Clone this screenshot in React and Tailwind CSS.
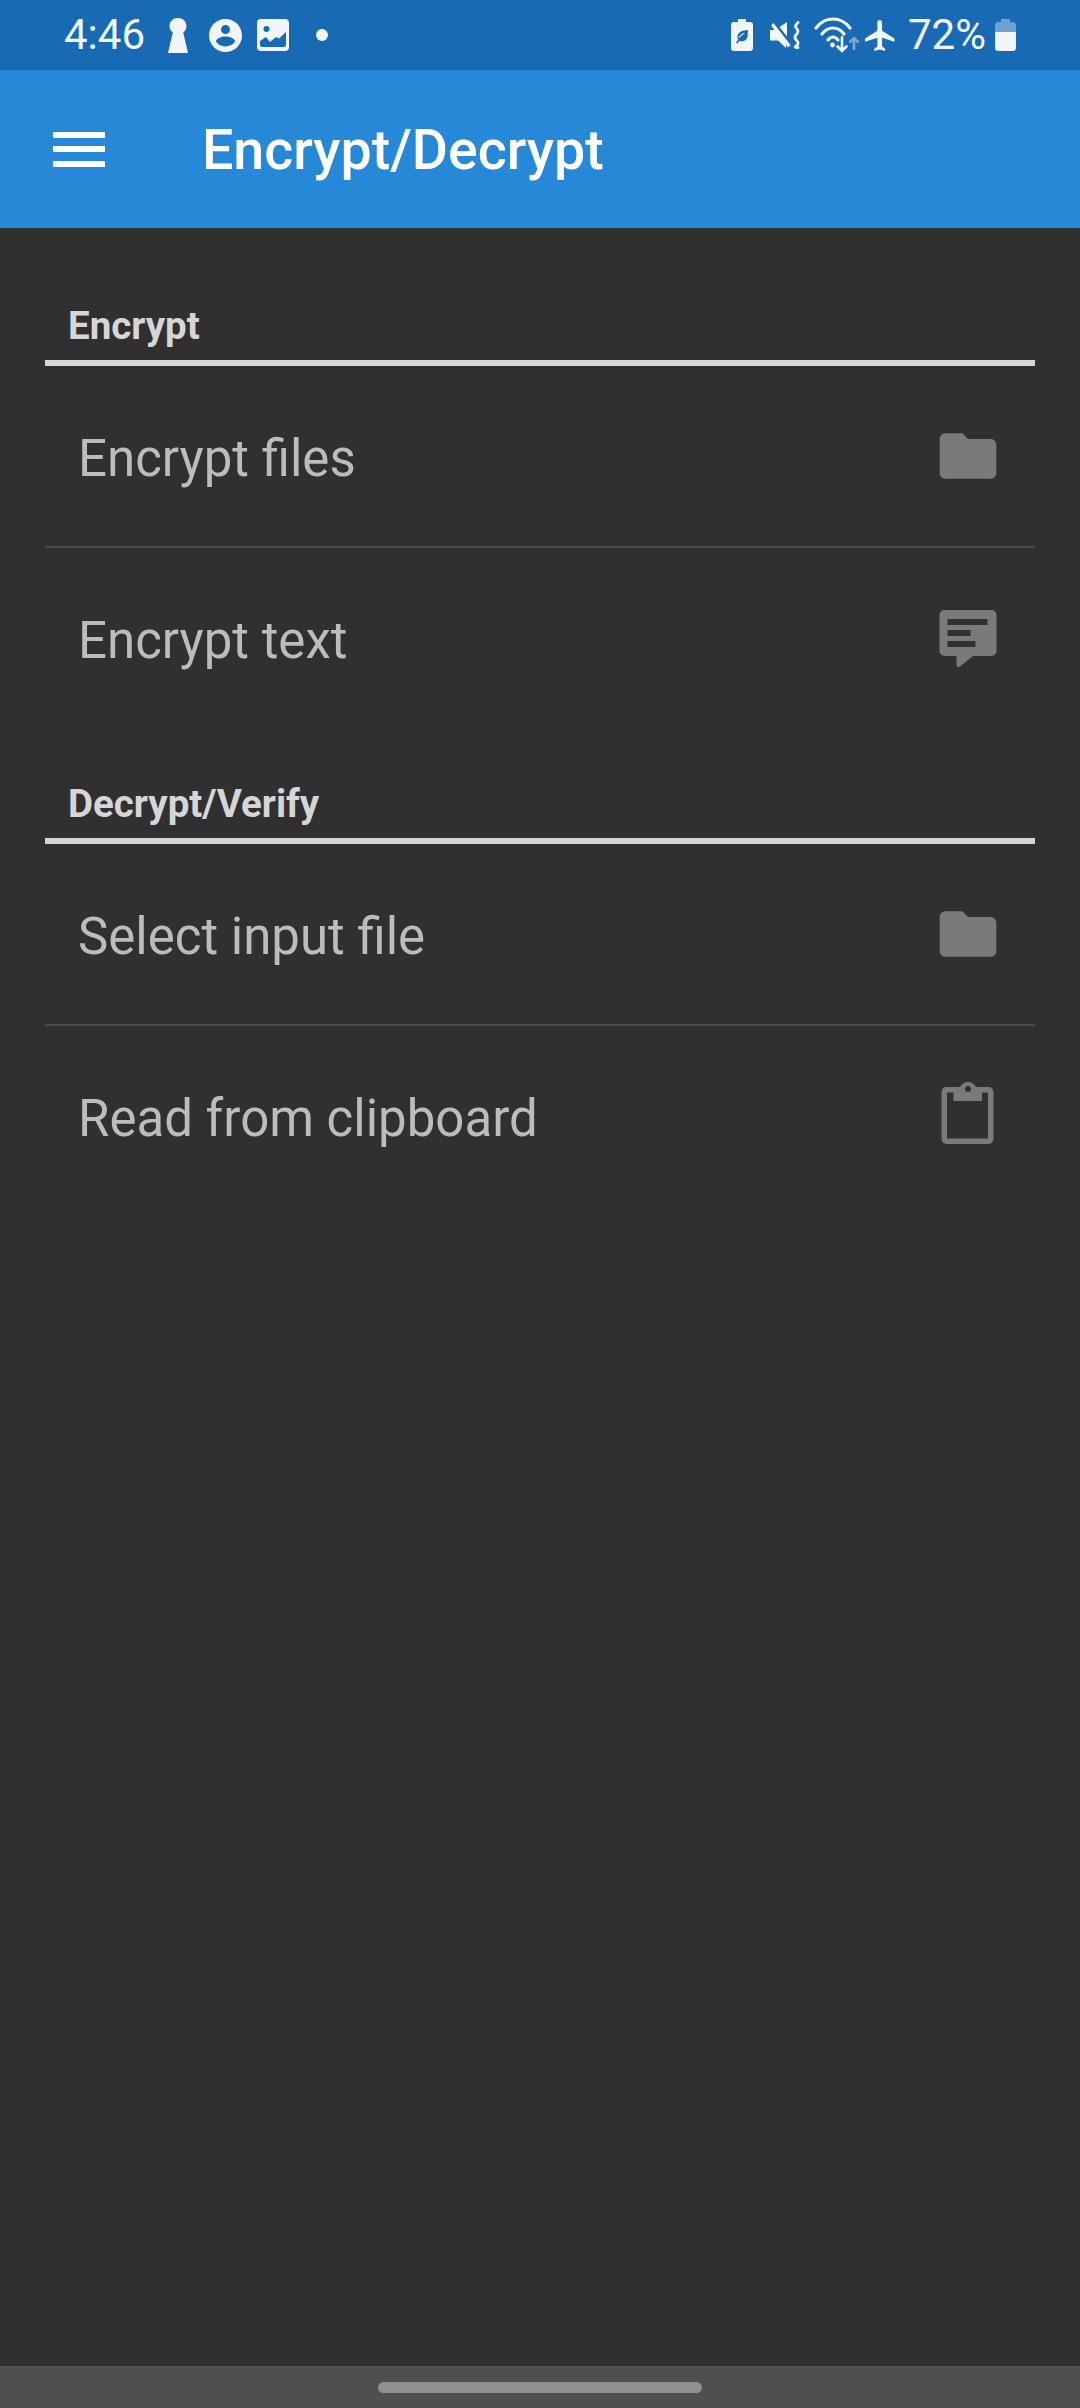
const Folder = () => (
  <svg viewBox="0 0 24 24" className="w-[68px] h-[68px] fill-[#7a7a7a]">
    <path d="M10 4H4c-1.1 0-2 .9-2 2v12c0 1.1.9 2 2 2h16c1.1 0 2-.9 2-2V8c0-1.1-.9-2-2-2h-8l-2-2z" />
  </svg>
);

const Comment = () => (
  <svg viewBox="0 0 68 68" className="w-[68px] h-[68px] fill-[#7a7a7a]">
    <path
      fillRule="evenodd"
      d="M10.500 6h47a5 5 0 0 1 5 5v36a5 5 0 0 1-5 5H39L26 62.500c-1.500 1.200-3.500.3-3.500-1.500V52h-12a5 5 0 0 1-5-5V11a5 5 0 0 1 5-5zM13.500 15v6h40v-6zM13.500 26v6h23v-6zM13.500 37v6h28v-6z"
    />
  </svg>
);

const Clipboard = () => (
  <svg viewBox="0 0 68 68" className="w-[68px] h-[68px] fill-[#7a7a7a] overflow-visible">
    <path
      fillRule="evenodd"
      d="M12.500 5H26.200A8.500 8.500 0 0 1 41.800 5H54.500a5 5 0 0 1 5 5v47a5 5 0 0 1-5 5h-42a5 5 0 0 1-5-5V10a5 5 0 0 1 5-5zM34 4a3 3 0 1 0 0 6 3 3 0 0 0 0-6zM13 10.500V56.500H54V10.500H48V19H19.500V10.500z"
    />
  </svg>
);

const Keyhole = () => (
  <svg viewBox="0 0 20 35" className="w-[20px] h-[35px] fill-[#f2f6fb]">
    <path d="M10 0c4.600 0 8.500 3.400 8.500 8 0 3-1.500 5.200-3.300 6.500L20 35H0l4.800-20.500C3 13.200 1.500 11 1.500 8c0-4.600 3.900-8 8.500-8z" />
  </svg>
);

const Person = () => (
  <svg viewBox="0 0 33 33" className="w-[33px] h-[33px] fill-[#f2f6fb]">
    <path
      fillRule="evenodd"
      d="M16.500 0a16.500 16.500 0 1 1 0 33 16.500 16.500 0 0 1 0-33zM16.500 6a4.500 4.500 0 1 0 0 9 4.500 4.500 0 0 0 0-9zM16.500 17.500c-4.800 0-8.500 2-9.700 4.800 1.700 2.800 5.500 5.200 9.700 5.200s8-2.400 9.700-5.200c-1.200-2.800-4.900-4.800-9.700-4.800z"
    />
  </svg>
);

const ImageIcon = () => (
  <svg viewBox="0 0 32 32" className="w-[32px] h-[32px] fill-[#f2f6fb]">
    <path
      fillRule="evenodd"
      d="M4 0h24a4 4 0 0 1 4 4v24a4 4 0 0 1-4 4H4a4 4 0 0 1-4-4V4a4 4 0 0 1 4-4zM9.500 7a3 3 0 1 0 0 6 3 3 0 0 0 0-6zM3 22v4a2 2 0 0 0 2 2h22a2 2 0 0 0 2-2V13l-7 6.500-3-1.500-6 5-4-5z"
    />
  </svg>
);

const LeafBattery = () => (
  <svg viewBox="0 0 22 32" className="w-[22px] h-[32px] fill-[#f2f6fb]">
    <path
      fillRule="evenodd"
      d="M7 0h8v3h4a3 3 0 0 1 3 3v23a3 3 0 0 1-3 3H3a3 3 0 0 1-3-3V6a3 3 0 0 1 3-3h4zM17 11c-5 .3-10 1.500-10.500 6.500-.1 1.200.2 2.300.7 3.200L5 23.500l1.300 1 2-2.500c4 1 8-.5 8.300-5 .1-2 .3-4 .4-6zM13.500 14.500c-2 1-3.500 2.500-4.800 4.500l-1-.7c1.500-2 3.300-3.500 5.500-4.700z"
    />
  </svg>
);

const Mute = () => (
  <svg viewBox="0 0 30 28" className="w-[30px] h-[28px]">
    <path className="fill-[#f2f6fb]" d="M0 9h4.500L1 4.500 3.500 2 20.500 24 18 26.500 16 24v3L8 19.500H0z M17 1v14.500L9.500 6z" />
    <path
      className="fill-none stroke-[#f2f6fb]"
      strokeWidth="2.800"
      strokeLinecap="round"
      d="M28 1.500c-3 3-3 4-1 6.500s1 4-1 6 -1 4 1 6 1 4 -1 5 0 1.500 2 1.500"
    />
  </svg>
);

const Wifi = () => (
  <svg viewBox="0 0 46 35" className="w-[46px] h-[35px] overflow-visible">
    <g className="fill-none stroke-[#f2f6fb]" strokeLinecap="round">
      <path strokeWidth="3.200" d="M2 10C11 -2 27 -2 36 10" />
      <path strokeWidth="3.200" d="M8 16C14 8 24 8 30 16" />
      <path strokeWidth="3.200" d="M14 22C17 18 21 18 24 22" />
      <path strokeWidth="2.600" d="M28 19V33M23.500 28.500l4.500 4.500 4.500-4.500" />
    </g>
    <circle cx="18.500" cy="27" r="2.400" className="fill-[#f2f6fb]" />
    <path
      className="fill-none stroke-[#7fa9d6]"
      strokeWidth="2.600"
      d="M40 32V20M35.500 24.500l4.500-4.500 4.500 4.500"
    />
  </svg>
);

const Plane = () => (
  <svg viewBox="2 2 20 20" className="w-[31px] h-[31px] fill-[#f2f6fb]">
    <path d="M21 16v-2l-8-5V3.500c0-.83-.67-1.500-1.500-1.500S10 2.670 10 3.500V9l-8 5v2l8-2.500V19l-2 1.500V22l3.500-1 3.500 1v-1.500L13 19v-5.500l8 2.500z" />
  </svg>
);

const Battery = () => (
  <svg viewBox="0 0 21 32" className="w-[21px] h-[32px]">
    <path className="fill-[#6fa0d3]" d="M6 0h9v3h2.500A3.500 3.500 0 0 1 21 6.500V13H0V6.500A3.500 3.500 0 0 1 3.500 3H6z" />
    <path className="fill-[#f2f6fb]" d="M0 13h21v15.500a3.500 3.500 0 0 1-3.500 3.500h-14A3.500 3.500 0 0 1 0 28.500z" />
  </svg>
);

const Row = ({ label, icon, divider }) => (
  <div className={divider ? "border-b-2 border-[#4a4a4a]" : ""}>
    <div className="flex items-center justify-between h-[180px] pl-[33px] pr-[33px]">
      <span className="pt-[4px] text-[51px] text-[#bcbcbc] leading-none">{label}</span>
      {icon}
    </div>
  </div>
);

const Section = ({ title, children }) => (
  <section>
    <div className="h-[116px] flex items-end pl-[23px] pb-[15px] border-b-[6px] border-[#d6d6d6]">
      <span className="text-[38.5px] font-bold text-[#d6d6d6] leading-none">{title}</span>
    </div>
    {children}
  </section>
);

export default function App() {
  return (
    <div
      className="w-[1080px] h-[2408px] flex flex-col bg-[#303030] overflow-hidden"
      style={{ fontFamily: "Roboto, sans-serif" }}
    >
      <div className="h-[70px] shrink-0 bg-[#196ab5] flex items-center justify-between pl-[64px] pr-[64px] text-[#f2f6fb]">
        <div className="flex items-center">
          <span className="text-[42px] leading-none w-[104px]">4:46</span>
          <Keyhole />
          <span className="w-[21px]" />
          <Person />
          <span className="w-[15px]" />
          <ImageIcon />
          <span className="w-[27px]" />
          <span className="w-[12px] h-[12px] rounded-full bg-[#f2f6fb]" />
        </div>
        <div className="flex items-center">
          <LeafBattery />
          <span className="w-[17px]" />
          <Mute />
          <span className="w-[14px]" />
          <Wifi />
          <span className="w-[5px]" />
          <Plane />
          <span className="w-[12px]" />
          <span className="text-[42px] leading-none w-[87px]">72%</span>
          <Battery />
        </div>
      </div>

      <header className="h-[158px] shrink-0 bg-[#2688d6] flex items-center pl-[53px]">
        <div className="w-[52px] h-[35px] flex flex-col justify-between">
          <span className="block h-[6px] bg-white" />
          <span className="block h-[6px] bg-white" />
          <span className="block h-[6px] bg-white" />
        </div>
        <h1 className="ml-[97px] pt-[4px] text-[55.5px] font-medium text-white leading-none">Encrypt/Decrypt</h1>
      </header>

      <main className="flex-1 mx-[45px] pt-[22px]">
        <Section title="Encrypt">
          <Row label="Encrypt files" icon={<Folder />} divider />
          <Row label="Encrypt text" icon={<Comment />} />
        </Section>
        <Section title="Decrypt/Verify">
          <Row label="Select input file" icon={<Folder />} divider />
          <Row label="Read from clipboard" icon={<Clipboard />} />
        </Section>
      </main>

      <footer className="h-[42px] shrink-0 bg-[#4f4f4f] flex items-start justify-center pt-[16px]">
        <span className="block w-[324px] h-[11px] rounded-full bg-[#919191]" />
      </footer>
    </div>
  );
}
